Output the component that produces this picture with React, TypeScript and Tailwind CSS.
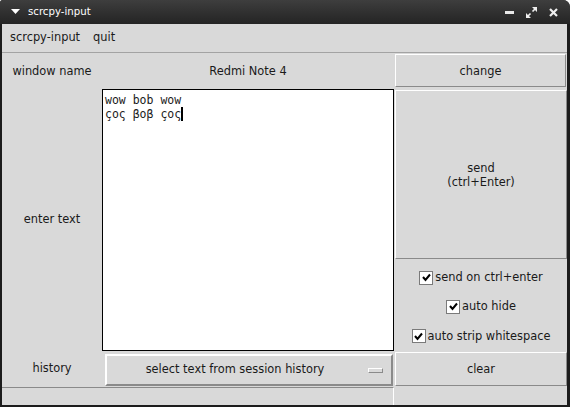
import React from 'react';

const ui = { fontFamily: '"DejaVu Sans", "Liberation Sans", sans-serif' };
const mono = { fontFamily: '"DejaVu Sans Mono", "Liberation Mono", monospace' };

function Check({ label }: { label: string }) {
    return (
        <div className="flex-1 flex items-center justify-center gap-[2px]">
            <span className="w-[14px] h-[14px] bg-white border border-[#7a7a7a] flex items-center justify-center">
                <svg width="9" height="9" viewBox="0 0 9 9">
                    <path d="M1 4 L3.5 7 L8 1.5" stroke="#000" strokeWidth="2" fill="none" />
                </svg>
            </span>
            <span className="text-[11.4px] text-[#1a1a1a]">{label}</span>
        </div>
    );
}

function Btn({ children, className }: { children: React.ReactNode; className?: string }) {
    return (
        <div className={"bg-[#d9d9d9] border-t border-l border-white border-r border-b border-r-[#8a8a8a] border-b-[#8a8a8a] flex flex-col items-center justify-center text-[11.4px] text-[#1a1a1a] leading-[14px] " + (className ?? '')}>
            {children}
        </div>
    );
}

export default function App() {
    return (
        <div className="w-[570px] h-[407px] bg-[#1c1c1c] rounded-tr-[7px] rounded-tl-[3px] flex flex-col overflow-hidden" style={ui}>
            {/* title bar */}
            <div className="h-[24px] bg-gradient-to-b from-[#3e3e3e] to-[#242424] flex items-center px-[11px] text-white">
                <svg width="9" height="6" viewBox="0 0 9 6" className="mr-[8px]">
                    <path d="M0 0 H9 L4.5 5 Z" fill="#fff" />
                </svg>
                <span className="text-[10.2px]">scrcpy-input</span>
                <div className="flex-1" />
                <div className="flex items-center gap-[12px] mr-[1px]">
                    <span className="w-[9px] h-[3px] bg-[#e8e8e8]" />
                    <svg width="11" height="11" viewBox="0 0 11 11">
                        <path d="M6 0 H11 V5 Z M0 6 V11 H5 Z" fill="#eee" />
                        <path d="M9 2 L6.5 4.5 M2 9 L4.5 6.5" stroke="#eee" strokeWidth="1.6" />
                    </svg>
                    <svg width="9" height="9" viewBox="0 0 9 9">
                        <path d="M1 1 L8 8 M8 1 L1 8" stroke="#eee" strokeWidth="2.2" />
                    </svg>
                </div>
            </div>

            {/* window body */}
            <div className="flex-1 ml-[2px] mr-[3px] mb-[2px] bg-[#d9d9d9] flex flex-col text-[#1a1a1a]">
                {/* menu bar */}
                <div className="h-[29px] border-b border-[#a3a3a3] flex items-center gap-[13px] px-[8px] text-[11.4px]">
                    <span>scrcpy-input</span>
                    <span>quit</span>
                </div>

                <div className="flex-1 grid grid-cols-[100px_292px_173px] grid-rows-[36px_262px_36px_18px] text-[11.4px]">
                    {/* row 1 */}
                    <div className="flex items-center justify-center pt-[1px]">window name</div>
                    <div className="flex items-center justify-center pt-[1px]">Redmi Note 4</div>
                    <div className="p-[1px] pb-[2px]">
                        <Btn className="h-full">change</Btn>
                    </div>

                    {/* row 2 */}
                    <div className="flex items-center justify-center">enter text</div>
                    <div className="bg-white border border-black pl-[2px] pt-[3px] text-[11.5px] leading-[14px] text-[#1a1a1a] whitespace-pre" style={mono}>
                        <div>wow bob wow</div>
                        <div className="flex items-center">çoς βoβ çoς<span className="inline-block w-[2px] h-[14px] bg-black" /></div>
                    </div>
                    <div className="flex flex-col pl-[1px] pt-[1px]">
                        <Btn className="h-[169px]">
                            <span>send</span>
                            <span>(ctrl+Enter)</span>
                        </Btn>
                        <div className="flex-1 flex flex-col pt-[4px]">
                            <Check label="send on ctrl+enter" />
                            <Check label="auto hide" />
                            <Check label="auto strip whitespace" />
                        </div>
                    </div>

                    {/* row 3 */}
                    <div className="flex items-center justify-center">history</div>
                    <div className="pl-[3px] pr-[1px] pt-[3px] pb-[1px]">
                        <div className="h-full bg-[#d9d9d9] border-t-2 border-l-2 border-white border-r-2 border-b-2 border-r-[#8a8a8a] border-b-[#8a8a8a] flex items-center relative">
                            <span className="flex-1 text-center pr-[28px]">select text from session history</span>
                            <span className="absolute right-[8px] top-[12px] w-[15px] h-[5px] bg-[#d9d9d9] border-t border-l border-white border-r border-b border-r-[#8a8a8a] border-b-[#8a8a8a]" />
                        </div>
                    </div>
                    <div className="pl-[1px] pt-[1px] pb-[1px]">
                        <Btn className="h-full">clear</Btn>
                    </div>

                    {/* row 4 */}
                    <div className="col-span-2 border-t border-[#8a8a8a] border-r border-r-white" />
                    <div />
                </div>
            </div>
        </div>
    );
}
